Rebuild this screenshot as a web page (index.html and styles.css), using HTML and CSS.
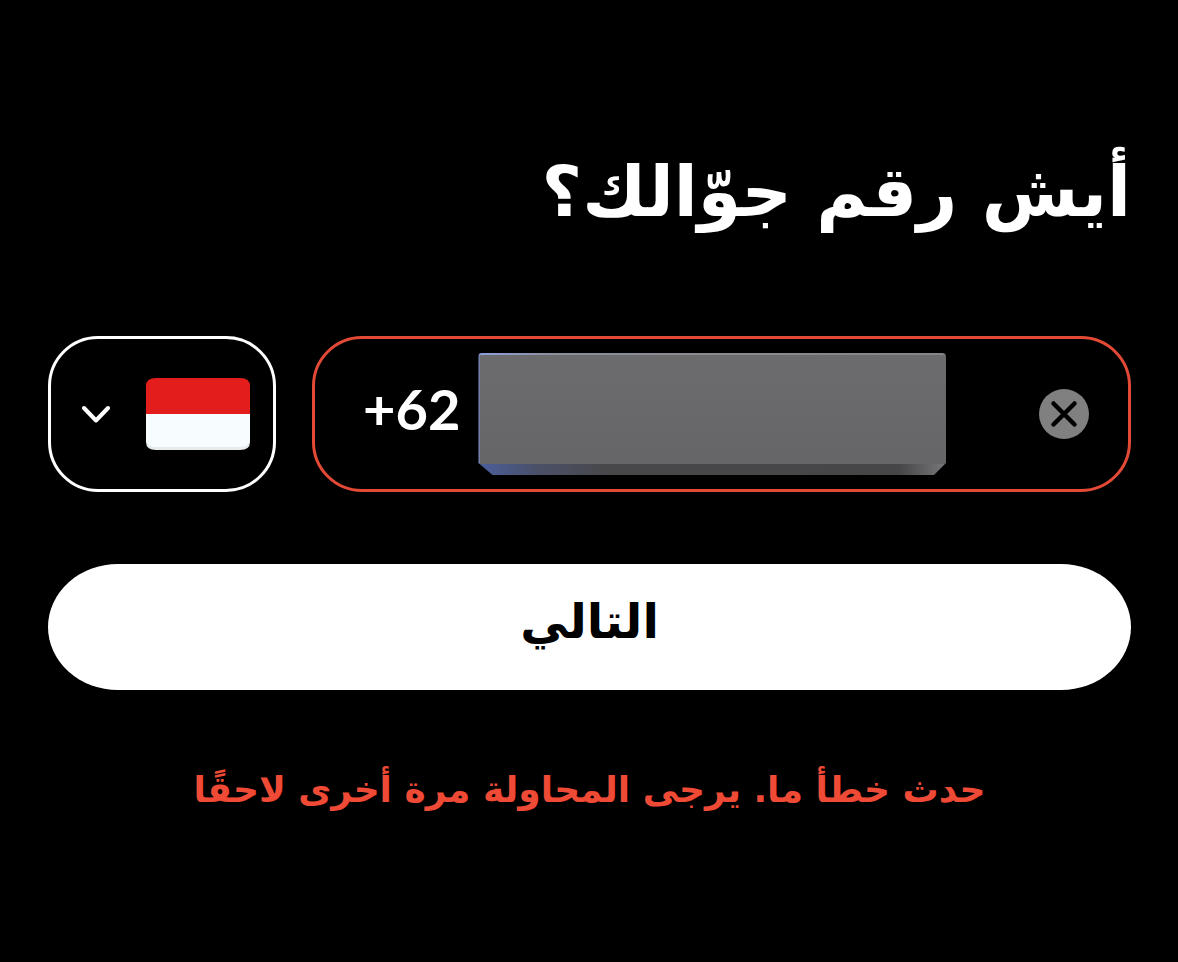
FILE: index.html
```
<!DOCTYPE html>
<html lang="ar" dir="rtl">
<head>
    <meta charset="UTF-8">
    <meta name="viewport" content="width=device-width, initial-scale=1.0">
    <title>رقم الجوال</title>
    <link rel="stylesheet" href="styles.css">
</head>
<body>
    <main class="signup">
        <h1 class="title"><label for="phone">أيش رقم جوّالك؟</label></h1>

        <form class="phone-form">
            <div class="fields">
                <div class="phone-field">
                    <span class="dial-code">+62</span>
                    <div class="number">
                        <input type="tel" id="phone" class="number-input" autocomplete="tel-national">
                        <span class="number-cover"></span>
                    </div>
                    <button type="button" class="clear" aria-label="مسح">
                        <svg viewBox="0 0 50 50" width="50" height="50">
                            <circle cx="25" cy="25" r="25" fill="#808080"/>
                            <path d="M14.500 14.500L35.500 35.500M35.500 14.500L14.500 35.500" stroke="#000" stroke-width="4.500" stroke-linecap="round"/>
                        </svg>
                    </button>
                </div>

                <div class="country">
                    <svg class="flag" viewBox="0 0 104 72" width="104" height="72">
                        <path d="M10 0H94Q104 0 104 8V36H0V8Q0 0 10 0Z" fill="#e31d1c"/>
                        <path d="M0 36H104V64Q104 72 94 72H10Q0 72 0 64Z" fill="#e8eced"/>
                        <path d="M0 36H104V61Q104 69 94 69H10Q0 69 0 61Z" fill="#f7fcff"/>
                    </svg>
                    <svg class="chevron" viewBox="0 0 28 18" width="28" height="18">
                        <path d="M2 3L14 15.500L26 3" fill="none" stroke="#fff" stroke-width="4" stroke-linecap="round" stroke-linejoin="round"/>
                    </svg>
                    <select class="country-select" aria-label="الدولة">
                        <option>ID</option>
                    </select>
                </div>
            </div>

            <button type="button" class="next">التالي</button>
            <p class="error" role="alert">حدث خطأ ما. يرجى المحاولة مرة أخرى لاحقًا</p>
        </form>
    </main>
</body>
</html>
```

FILE: styles.css
```
* {
    box-sizing: border-box;
}

body {
    margin: 0;
    background: #000;
    color: #fff;
    font-family: "DejaVu Sans", sans-serif;
}

.signup {
    padding: 132px 47px 48px 48px;
}

.title {
    margin: 0 0 84px;
    font-size: 70px;
    line-height: 120px;
    font-weight: bold;
}

.fields {
    display: flex;
    gap: 36px;
    margin-bottom: 72px;
}

.phone-field,
.country {
    display: flex;
    align-items: center;
    height: 156px;
    border: 3px solid #fff;
    border-radius: 50px;
}

.phone-field {
    flex: 1;
    direction: ltr;
    padding: 0 39px 0 48px;
    border-color: #e24a36;
}

.dial-code {
    margin-bottom: 12px;
    font-family: Lato, sans-serif;
    font-size: 56px;
    font-weight: bold;
}

.number {
    position: relative;
    flex: 1;
    height: 122px;
    margin: 0 93px 0 18px;
}

.number-input {
    width: 100%;
    height: 100%;
    padding: 0;
    border: 0;
    background: none;
    color: #fff;
    font-family: Lato, sans-serif;
    font-size: 56px;
}

/* slab that hides the number */
.number-cover {
    position: absolute;
    inset: 0;
    background:
        linear-gradient(90deg, #4a5f9c 0, #4b5068 60px, #48484a 130px, #464648 90%, #77777a 100%) bottom / 100% 11px no-repeat,
        linear-gradient(90deg, #8d9fe0, #8b8f98 80px, #858587) top / 100% 2px no-repeat,
        linear-gradient(90deg, #7380ae, #7380ae) left / 2px 100% no-repeat,
        linear-gradient(#6c6c6e, #656567);
    border-radius: 4px;
    clip-path: polygon(0 0, 100% 0, 100% calc(100% - 12px), calc(100% - 12px) 100%, 14px 100%, 0 calc(100% - 12px));
}

.clear {
    padding: 0;
    border: 0;
    background: none;
    cursor: pointer;
}

.clear svg {
    display: block;
}

.country {
    position: relative;
    justify-content: space-between;
    width: 228px;
    padding: 0 23px 0 31px;
}

.country-select {
    position: absolute;
    inset: 0;
    width: 100%;
    opacity: 0;
    cursor: pointer;
}

.next {
    display: block;
    width: 100%;
    height: 126px;
    padding: 0 0 12px;
    border: 0;
    border-radius: 70px / 63px;
    background: #fff;
    color: #000;
    font-family: inherit;
    font-size: 48px;
    font-weight: bold;
    cursor: pointer;
}

.error {
    margin: 64px 0 0;
    color: #ef4a35;
    font-size: 36px;
    line-height: 72px;
    font-weight: bold;
    text-align: center;
}
```
